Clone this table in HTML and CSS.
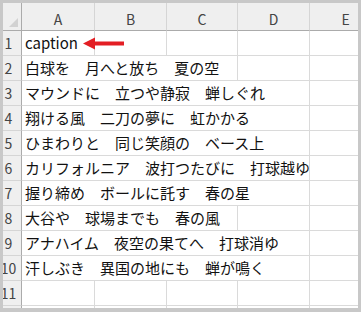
FILE: index.html
```html
<!DOCTYPE html>
<html lang="ja">
<head>
  <meta charset="UTF-8">
  <meta name="viewport" content="width=device-width, initial-scale=1.0">
  <title>Sheet1</title>
  <link rel="stylesheet" href="styles.css">
</head>
<body>
  <div class="frame">
    <div class="sheet">
      <!-- column headers -->
      <div class="corner"><span class="select-all"></span></div>
      <div class="colhead">A</div>
      <div class="colhead">B</div>
      <div class="colhead">C</div>
      <div class="colhead">D</div>
      <div class="colhead">E</div>

      <div class="rowhead">1</div>
      <div class="cell note">caption
        <svg class="arrow" width="41" height="13" viewBox="0 0 41 13">
          <polygon points="0,6.5 12,0.5 12,12.5" fill="#e31e24"/>
          <rect x="11" y="4.5" width="30" height="4" fill="#e31e24"/>
        </svg>
      </div>
      <div class="cell"></div>
      <div class="cell"></div>
      <div class="cell"></div>
      <div class="cell"></div>

      <div class="rowhead">2</div>
      <div class="cell span3">白球を　月へと放ち　夏の空</div>
      <div class="cell"></div>
      <div class="cell"></div>

      <div class="rowhead">3</div>
      <div class="cell span4">マウンドに　立つや静寂　蝉しぐれ</div>
      <div class="cell"></div>

      <div class="rowhead">4</div>
      <div class="cell span4">翔ける風　二刀の夢に　虹かかる</div>
      <div class="cell"></div>

      <div class="rowhead">5</div>
      <div class="cell span4">ひまわりと　同じ笑顔の　ベース上</div>
      <div class="cell"></div>

      <div class="rowhead">6</div>
      <div class="cell span4">カリフォルニア　波打つたびに　打球越ゆ</div>
      <div class="cell"></div>

      <div class="rowhead">7</div>
      <div class="cell span4">握り締め　ボールに託す　春の星</div>
      <div class="cell"></div>

      <div class="rowhead">8</div>
      <div class="cell span3">大谷や　球場までも　春の風</div>
      <div class="cell"></div>
      <div class="cell"></div>

      <div class="rowhead">9</div>
      <div class="cell span4">アナハイム　夜空の果てへ　打球消ゆ</div>
      <div class="cell"></div>

      <div class="rowhead">10</div>
      <div class="cell span4">汗しぶき　異国の地にも　蝉が鳴く</div>
      <div class="cell"></div>

      <div class="rowhead">11</div>
      <div class="cell"></div>
      <div class="cell"></div>
      <div class="cell"></div>
      <div class="cell"></div>
      <div class="cell"></div>

      <!-- next row only peeks out under the frame -->
      <div class="rowhead"></div>
      <div class="cell"></div>
      <div class="cell"></div>
      <div class="cell"></div>
      <div class="cell"></div>
      <div class="cell"></div>
    </div>
  </div>
</body>
</html>
```

FILE: styles.css
```css
/* page is just the framed sheet */
body {
  margin: 0;
  background-color: #ffffff;
  font-family: "Noto Sans CJK JP", "Noto Sans", sans-serif;
}

/* grey frame round the worksheet */
.frame {
  width: 361px;
  height: 312px;
  box-sizing: border-box;
  border: 3px solid #c8c8c8;
  border-bottom-width: 4px;
  overflow: hidden;
}

/* grid of headers and cells, row header column is partly cut off */
.sheet {
  display: grid;
  grid-template-columns: 26px 73px 72px 71px 72px 72px;
  grid-template-rows: 28px repeat(12, 25px);
  margin-left: -7px;
  width: max-content;
}

.corner,
.colhead,
.rowhead {
  background-color: #efefef;
  color: #444444;
  font-size: 14px;
  box-sizing: border-box;
}

.corner {
  position: relative;
  border-right: 1px solid #ababab;
  border-bottom: 1px solid #ababab;
}

/* small select-all triangle */
.select-all {
  position: absolute;
  right: 3px;
  bottom: 3px;
  width: 9px;
  height: 9px;
  background-color: #d2d2d2;
  clip-path: polygon(100% 0, 100% 100%, 0 100%);
}

.colhead {
  display: flex;
  justify-content: center;
  align-items: center;
  padding-top: 4px;
  border-right: 1px solid #d5d5d5;
  border-bottom: 1px solid #ababab;
}

.rowhead {
  display: flex;
  justify-content: center;
  align-items: flex-end;
  padding-bottom: 2px;
  line-height: 20px;
  border-right: 1px solid #ababab;
  border-bottom: 1px solid #d5d5d5;
}

.cell {
  display: flex;
  align-items: flex-end;
  padding: 0 0 2px 3px;
  box-sizing: border-box;
  font-size: 15px;
  line-height: 20px;
  color: #111111;
  white-space: nowrap;
  border-right: 1px solid #dadada;
  border-bottom: 1px solid #dadada;
}

.span3 {
  grid-column: span 3;
}

.span4 {
  grid-column: span 4;
}

/* red pointer next to the caption text */
.note {
  position: relative;
}

.arrow {
  position: absolute;
  left: 61px;
  top: 6px;
}
```
